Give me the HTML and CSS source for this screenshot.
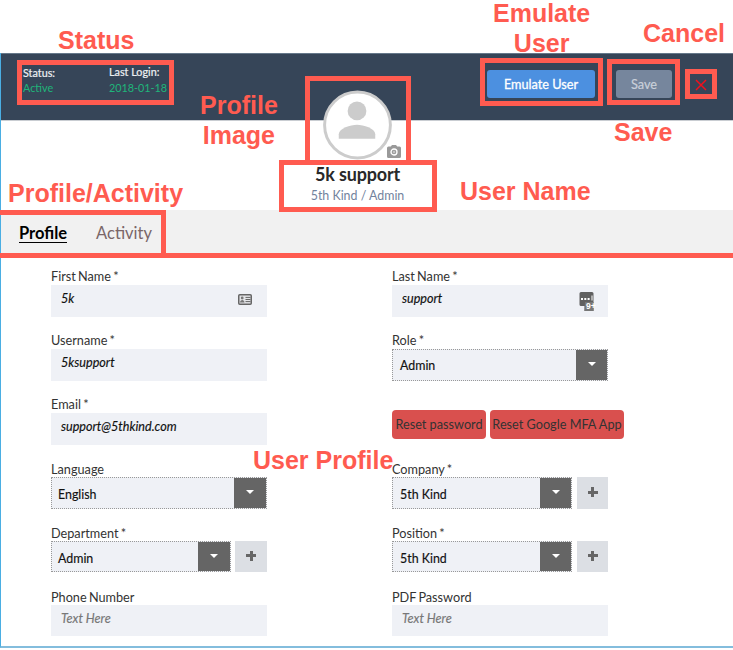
FILE: index.html
```html
<!DOCTYPE html>
<html lang="en">
<head>
<meta charset="utf-8">
<title>User profile</title>
<link rel="stylesheet" href="styles.css">
</head>
<body>
<main class="panel">
  <header class="topbar">
    <dl class="meta">
      <div><dt>Status:</dt><dd>Active</dd></div>
      <div class="login"><dt>Last Login:</dt><dd>2018-01-18</dd></div>
    </dl>
    <div class="actions">
      <button class="btn emulate">Emulate User</button>
      <button class="btn save">Save</button>
      <button class="close" aria-label="Cancel"><svg width="12" height="12" viewBox="0 0 12 12"><path d="M1 1l10 10M11 1L1 11" stroke="#f3101c" stroke-width="1.5" fill="none"/></svg></button>
    </div>
  </header>
  <section class="identity">
    <div class="avatar">
      <svg width="69" height="70" viewBox="0 0 70 70"><circle cx="35" cy="35" r="33.4" fill="#fff" stroke="#ccc" stroke-width="3"/><circle cx="34.5" cy="20.7" r="9.5" fill="#ccc"/><path d="M16 49v-4.500c0-6 12-9.700 18.500-9.700s18.500 3.700 18.500 9.700V49z" fill="#ccc"/></svg>
      <svg class="camera" width="14" height="13" viewBox="0 0 14 13"><path d="M5 0h4l1.200 1.500h2.300A1.500 1.500 0 0 1 14 3v8.500a1.500 1.500 0 0 1-1.500 1.500h-11A1.500 1.500 0 0 1 0 11.500V3a1.500 1.500 0 0 1 1.500-1.500h2.300z" fill="#999"/><circle cx="7" cy="7" r="3" fill="none" stroke="#fff" stroke-width="1.300"/><circle cx="7" cy="7" r="1.200" fill="#c4c4c4"/></svg>
    </div>
    <h1>5k support</h1>
    <p>5th Kind / Admin</p>
  </section>
  <nav class="tabs"><a class="active">Profile</a><a>Activity</a></nav>
  <form class="form">
    <div class="field"><label>First Name *</label><div class="input">5k
      <svg class="card-icon" width="14" height="11" viewBox="0 0 14 11"><rect x=".75" y=".75" width="12.500" height="9.500" rx="1" fill="#e4e5e8" stroke="#666" stroke-width="1.500"/><circle cx="4.200" cy="4" r="1.400" fill="#777"/><path d="M2 8.600c0-3.500 4.500-3.500 4.500 0z" fill="#777"/><path d="M7.500 3.400h5M7.500 5.500h5M7.500 7.600h5" stroke="#666" stroke-width="1"/></svg></div></div>
    <div class="field"><label>Last Name *</label><div class="input">support
      <svg class="pass-icon" width="17" height="20" viewBox="0 0 17 20"><path d="M2 0h11a1.500 1.500 0 0 1 1.500 1.500V19H5.500v-5H2a1.500 1.500 0 0 1-1.500-1.500v-11A1.500 1.500 0 0 1 2 0z" fill="#606060"/><path d="M6 10h8.500v9H5.500z" fill="#777"/><path d="M2 6h2v2H2zM5.300 6h2v2h-2zM8.600 6h2v2h-2zM12.500 3.500h1v5h-1z" fill="#fff"/><text x="7" y="17" font-size="8.500" font-weight="bold" font-family="Liberation Sans" font-style="normal" fill="#fff">9+</text></svg></div></div>
    <div class="field"><label>Username *</label><div class="input high">5ksupport</div></div>
    <div class="field"><label>Role *</label><div class="row"><div class="select">Admin<span class="arrow"></span></div></div></div>
    <div class="field"><label>Email *</label><div class="input high">support@5thkind.com</div></div>
    <div class="resets"><button type="button" class="pwd">Reset password</button><button type="button" class="mfa">Reset Google MFA App</button></div>
    <div class="field low"><label>Language</label><div class="row"><div class="select left">English<span class="arrow"></span></div></div></div>
    <div class="field low"><label>Company *</label><div class="row"><div class="select">5th Kind<span class="arrow"></span></div><div class="add"></div></div></div>
    <div class="field low short"><label>Department *</label><div class="row"><div class="select left">Admin<span class="arrow"></span></div><div class="add wide"></div></div></div>
    <div class="field low short"><label>Position *</label><div class="row"><div class="select">5th Kind<span class="arrow"></span></div><div class="add"></div></div></div>
    <div class="field low short"><label>Phone Number</label><div class="input placeholder">Text Here</div></div>
    <div class="field low short"><label>PDF Password</label><div class="input placeholder">Text Here</div></div>
  </form>
</main>
<div class="box box-status"></div>
<div class="box box-image"></div>
<div class="box box-name"></div>
<div class="box box-emulate"></div>
<div class="box box-save"></div>
<div class="box box-cancel"></div>
<div class="box box-tabs"></div>
<div class="note note-status">Status</div>
<div class="note note-image">Profile<br>Image</div>
<div class="note note-tabs">Profile/Activity</div>
<div class="note note-emulate">Emulate<br>User</div>
<div class="note note-cancel">Cancel</div>
<div class="note note-save">Save</div>
<div class="note note-name">User Name</div>
<div class="note note-profile">User Profile</div>
</body>
</html>
```
FILE: styles.css
```css
* { box-sizing: border-box; }
body {
  margin: 0;
  height: 650px;
  overflow: hidden;
  position: relative;
  padding-top: 53px;
  background: #fff;
  font-family: Lato, "Liberation Sans", sans-serif;
  color: #333;
}
button { font-family: inherit; border: 0; padding: 0; }
.panel {
  height: 595px;
  border-left: 1px solid #4aaee3;
  border-bottom: 2px solid #83bddd;
}
.topbar {
  height: 68px;
  display: flex;
  justify-content: space-between;
  background: #364558;
  border-top: 1px solid #66788a;
  border-bottom: 1px solid #c9cdd2;
}
.meta { display: flex; margin: 10px 0 0 22px; font-size: 11px; line-height: 15px; }
.meta div { width: 86px; padding-top: 1px; }
.meta .login { padding-top: 0; }
.meta dt { color: #eef0f3; font-size: 10.8px; -webkit-text-stroke: .2px #eef0f3; }
.meta dd { margin: 0; color: #1fb57a; font-size: 10.8px; white-space: nowrap; }
.login dd { line-height: 17px; }
.actions { display: flex; align-items: flex-start; padding: 16px 26px 0 0; }
.btn { height: 28px; border-radius: 3px; font-size: 12.7px; }
.emulate { width: 108px; background: #4c90e0; color: #fff; -webkit-text-stroke: .3px #fff; }
.save { width: 56px; margin-left: 21px; background: #76869d; color: #c9d0da; -webkit-text-stroke: .2px #c9d0da; }
.close { margin: 9px 0 0 23px; width: 12px; height: 12px; background: none; display: flex; }
.identity { height: 89px; display: flex; flex-direction: column; align-items: center; padding-right: 19px; }
.avatar { height: 70px; width: 69px; margin-top: -31px; position: relative; flex: none; }
.avatar svg { display: block; }
.avatar .camera { position: absolute; left: 64px; top: 55px; }
.identity h1 { margin: 3px 0 0; font-size: 18px; line-height: 22px; font-weight: 700; letter-spacing: -.15px; color: #292929; }
.identity p { margin: 3px 0 0; font-size: 12.4px; line-height: 16px; color: #72839d; }
.tabs { height: 48px; background: #f1f1f1; display: flex; align-items: flex-start; gap: 29px; padding: 14px 0 0 18px; font-size: 16.5px; line-height: 19px; color: #7a6668; border-bottom: 5px solid #ff5b50; }
.tabs .active { color: #000; font-weight: 700; line-height: 18px; padding-top: 1px; margin-top: -1px; box-shadow: 0 1px #000; }
.form {
  display: grid;
  grid-template-columns: 216px 232px;
  grid-auto-rows: 64px;
  column-gap: 125px;
  padding: 9px 0 0 50px;
}
.field { width: 216px; }
.field label { display: block; height: 18px; line-height: 19px; font-size: 12.7px; word-spacing: -1px; white-space: nowrap; }
.low label { line-height: 21px; }
.input { height: 32px; background: #eff1f6; padding: 0 10px; line-height: 28px; font-size: 12.6px; font-style: italic; color: #111; -webkit-text-stroke: .15px; position: relative; }
.high { line-height: 27px; }
.placeholder { color: #777; }
.card-icon { position: absolute; left: 187px; top: 9px; }
.pass-icon { position: absolute; left: 187px; top: 7px; -webkit-text-stroke: 0; }
.row { display: flex; height: 32px; }
.short .row, .short .input { height: 31px; }
.select { flex: 1; border: 1px dotted #999; background: #eff1f6; color: #111; padding-left: 7px; line-height: 32px; font-size: 12.4px; display: flex; justify-content: space-between; -webkit-text-stroke: .15px; }
.low .select { line-height: 33px; }
.select.left { padding-left: 6px; }
.arrow { width: 31px; background: #656565; display: flex; align-items: center; justify-content: center; padding-bottom: 2px; }
.left .arrow { width: 32px; }
.arrow::before { content: ""; border: 4px solid transparent; border-top-color: #fff; border-bottom: 0; }
.add { width: 31px; margin-left: 5px; background: #dcdfe4; display: grid; place-items: center; padding-bottom: 2px; }
.add.wide { width: 32px; margin-left: 4px; }
.add::before { content: ""; width: 10px; height: 10px; background: linear-gradient(#666, #666) center / 10px 3px no-repeat, linear-gradient(#666, #666) center / 3px 10px no-repeat; }
.resets { display: flex; gap: 4px; padding-top: 15px; }
.resets button { height: 29px; border-radius: 4px; background: #d9504e; color: #333; font-size: 12.7px; white-space: nowrap; padding-bottom: 1px; }
.pwd { width: 94px; }
.mfa { width: 134px; }
.box { position: absolute; border: 5px solid #ff5b50; }
.box-status { left: 17px; top: 60px; width: 157px; height: 45px; }
.box-image { left: 305px; top: 76px; width: 106px; height: 89px; }
.box-name { left: 279px; top: 160px; width: 158px; height: 52px; }
.box-emulate { left: 480px; top: 58px; width: 123px; height: 48px; }
.box-save { left: 607px; top: 59px; width: 73px; height: 46px; }
.box-cancel { left: 685px; top: 69px; width: 32px; height: 30px; }
.box-tabs { left: 0; top: 210px; width: 166px; height: 48px; border-left: 0; }
.note { position: absolute; font: bold 25px/30px "Liberation Sans", Arial, sans-serif; color: #ff5b50; text-align: center; white-space: nowrap; }
.note-status { left: 58px; top: 25px; }
.note-image { left: 200px; top: 90px; }
.note-tabs { left: 8px; top: 178px; }
.note-emulate { left: 493px; top: -2px; }
.note-cancel { left: 643px; top: 18px; }
.note-save { left: 614px; top: 117px; }
.note-name { left: 460px; top: 176px; }
.note-profile { left: 253px; top: 445px; }
```
